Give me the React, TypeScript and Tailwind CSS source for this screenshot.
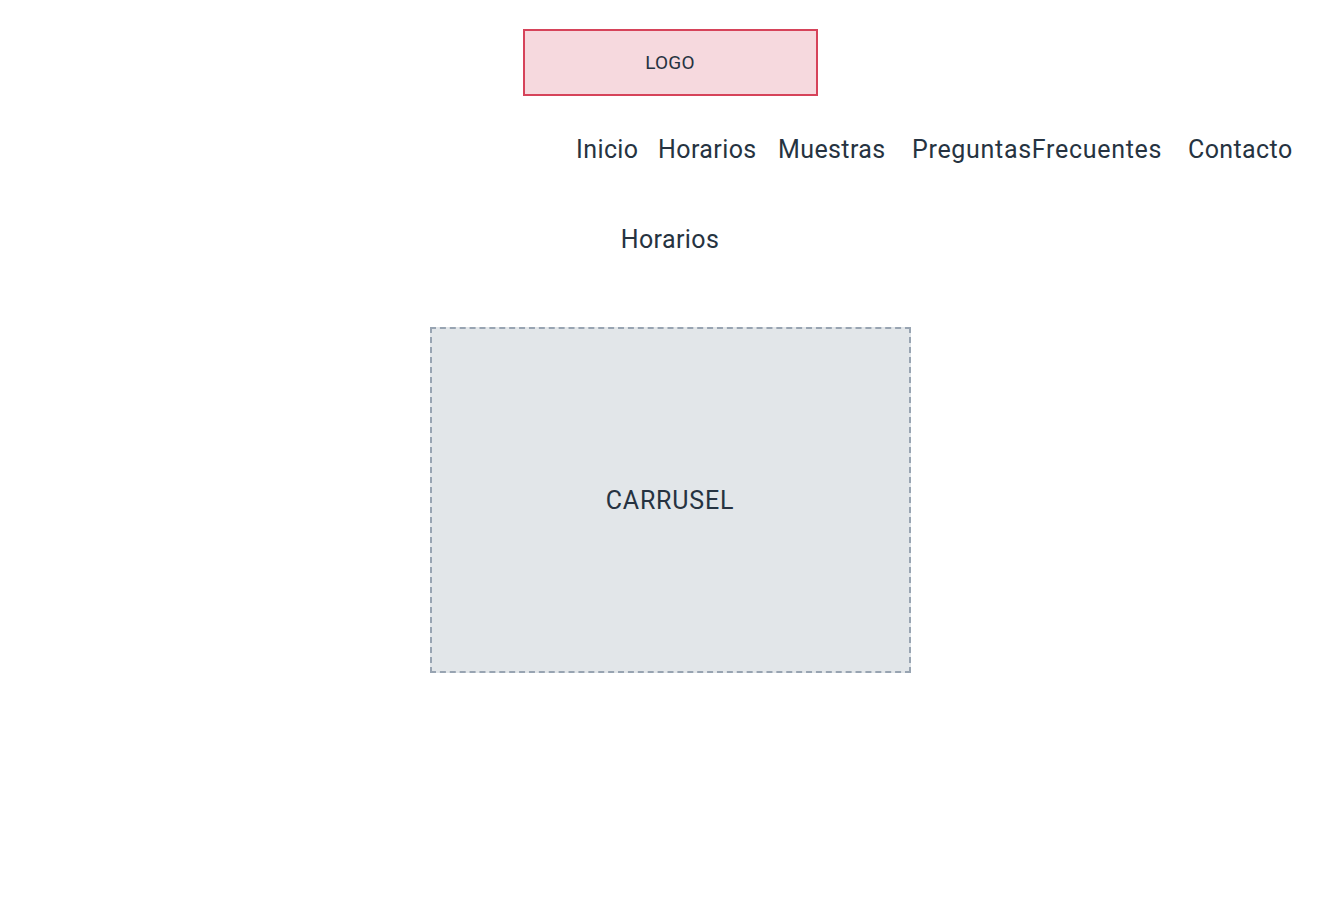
export default function App() {
  const font = { fontFamily: '"Roboto", "Liberation Sans", sans-serif' };
  return (
    <div className="min-h-[924px] w-[1340px] bg-white text-[#263341]" style={font}>
      <header className="flex flex-col items-center pt-[29px]">
        <div className="flex h-[67px] w-[295px] items-center justify-center border-2 border-[#d6435a] bg-[#f6d9de] pt-[2px] text-[19px] tracking-[0.2px]">
          LOGO
        </div>
      </header>
      <nav className="mt-[38px] flex h-[32px] items-center pl-[576px] text-[25px] leading-[32px] tracking-[0.4px]">
        <a className="w-[82px]">Inicio</a>
        <a className="w-[120px]">Horarios</a>
        <a className="w-[134px]">Muestras</a>
        <a className="w-[276px] tracking-[0.7px]">PreguntasFrecuentes</a>
        <a>Contacto</a>
      </nav>
      <h2 className="mt-[58px] text-center text-[25px] leading-[32px] tracking-[0.4px]">Horarios</h2>
      <section className="mt-[71px] flex justify-center">
        <div className="flex h-[346px] w-[481px] items-center justify-center border-2 border-dashed border-[#98a4b2] bg-[#e2e6e9] pt-[2px] text-[25px] tracking-[0.8px]">
          CARRUSEL
        </div>
      </section>
    </div>
  );
}
